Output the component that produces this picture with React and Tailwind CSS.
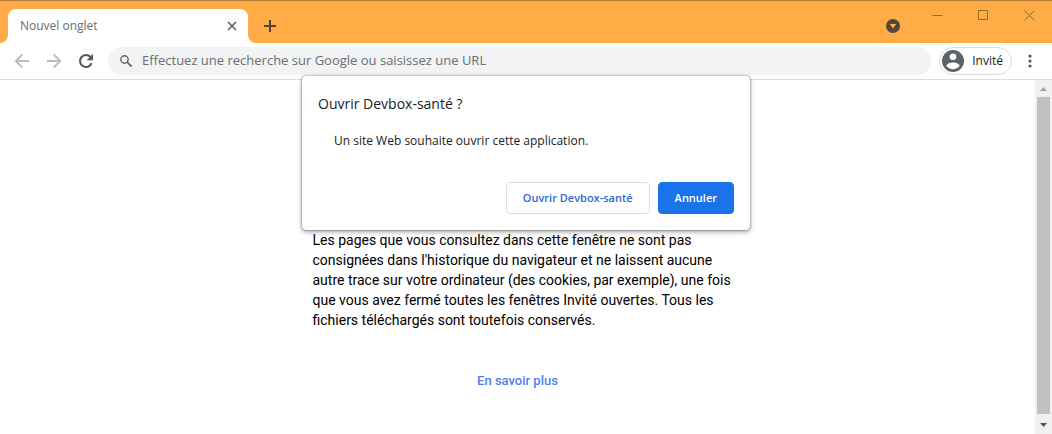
function TabFlare({ flip }) {
  return (
    <svg
      className={flip ? "h-2 w-2 shrink-0 -scale-x-100" : "h-2 w-2 shrink-0"}
      viewBox="0 0 8 8"
      aria-hidden="true"
    >
      <path d="M8 0v8H0a8 8 0 0 0 8-8z" fill="#fff" />
    </svg>
  );
}

function WindowButton({ label, d }) {
  return (
    <button type="button" aria-label={label} className="flex h-7 w-[46px] items-center justify-center">
      <svg
        className="h-[11px] w-[11px]"
        viewBox="0 0 11 11"
        fill="none"
        stroke="currentColor"
        aria-hidden="true"
      >
        <path d={d} />
      </svg>
    </button>
  );
}

function TitleBar() {
  return (
    <header className="flex h-[43px] items-start border-t border-[#b5803f] bg-[#ffac47]">
      <div className="mt-2 flex h-[34px] items-end">
        <TabFlare />
        <div className="flex h-full w-60 items-center justify-between rounded-t-lg bg-white pr-2.5 pl-3">
          <span className="text-xs text-[#6a6d71]">Nouvel onglet</span>
          <button type="button" aria-label="Fermer l'onglet" className="flex h-3 w-3 items-center justify-center">
            <svg className="h-3 w-3" viewBox="0 0 12 12" stroke="#5f6368" strokeWidth="1.7" aria-hidden="true">
              <path d="M2 2l8 8M10 2l-8 8" />
            </svg>
          </button>
        </div>
        <TabFlare flip />
      </div>
      <button type="button" aria-label="Nouvel onglet" className="mt-[19px] ml-2">
        <svg className="h-3 w-3" viewBox="0 0 12 12" stroke="#4d4439" strokeWidth="2" aria-hidden="true">
          <path d="M6 0v12M0 6h12" />
        </svg>
      </button>
      <div className="ml-auto flex items-start">
        <button type="button" aria-label="Rechercher dans les onglets" className="mt-[18px] mr-3.5">
          <svg className="h-3.5 w-3.5" viewBox="0 0 14 14" aria-hidden="true">
            <circle cx="7" cy="7" r="7" fill="#52483a" />
            <path d="M3.8 5h6.4L7 9.4z" fill="#ffac47" />
          </svg>
        </button>
        <div className="flex h-7 items-center text-[#9a692e]">
          <WindowButton label="Réduire" d="M0.5 5.5h10" />
          <WindowButton label="Agrandir" d="M0.5 0.5h9v9h-9z" />
          <WindowButton label="Fermer" d="M0.5 0.5l10 10M10.5 0.5l-10 10" />
        </div>
      </div>
    </header>
  );
}

function Toolbar() {
  return (
    <div className="flex h-[37px] items-center border-b border-[#dadce0] bg-white pr-5 pl-3.5">
      <nav className="flex items-center gap-4">
        <button type="button" aria-label="Retour">
          <svg className="h-4 w-4" viewBox="0 0 16 16" fill="none" stroke="#bcbdbf" strokeWidth="1.9" aria-hidden="true">
            <path d="M15 8H2.2M8.3 1.5L1.8 8l6.5 6.5" />
          </svg>
        </button>
        <button type="button" aria-label="Avancer">
          <svg className="h-4 w-4" viewBox="0 0 16 16" fill="none" stroke="#bcbdbf" strokeWidth="1.9" aria-hidden="true">
            <path d="M1 8h12.8M7.7 1.5L14.2 8l-6.5 6.5" />
          </svg>
        </button>
        <button type="button" aria-label="Actualiser">
          <svg className="h-4 w-4" viewBox="0 0 16 16" fill="none" aria-hidden="true">
            <path d="M13.6 10.2A6 6 0 1 1 12.4 3.9" stroke="#55585d" strokeWidth="2.1" />
            <path d="M15 0.8v6.4H8.6z" fill="#55585d" />
          </svg>
        </button>
      </nav>
      <label className="ml-3.5 flex h-7 grow items-center gap-2.5 rounded-full bg-[#f1f3f4] pr-4 pl-3">
        <svg className="h-3 w-3 shrink-0" viewBox="0 0 12 12" fill="none" stroke="#5f6368" strokeWidth="1.4" aria-hidden="true">
          <circle cx="4.5" cy="4.5" r="3.7" />
          <path d="M7.2 7.2l4.4 4.4" strokeWidth="1.7" />
        </svg>
        <input
          type="text"
          aria-label="Barre d'adresse et de recherche"
          placeholder="Effectuez une recherche sur Google ou saisissez une URL"
          className="min-w-0 grow bg-transparent text-[13px] outline-none placeholder:text-[#6b6e72]"
        />
      </label>
      <button
        type="button"
        className="ml-2 flex h-7 items-center gap-2 rounded-full border border-[#dadce0] pr-2 pl-0.5 text-xs text-[#202124]"
      >
        <svg className="h-[22px] w-[22px]" viewBox="0 0 22 22" aria-hidden="true">
          <circle cx="11" cy="11" r="11" fill="#5f6368" />
          <circle cx="11" cy="6.8" r="3.3" fill="#fff" />
          <path d="M11 12.4c-3 0-6.6 1.5-6.6 3.6 1.5 2 3.9 3.2 6.6 3.2s5.1-1.2 6.6-3.2c0-2.1-3.6-3.6-6.6-3.6z" fill="#fff" />
        </svg>
        Invité
      </button>
      <button type="button" aria-label="Menu" className="ml-4">
        <svg className="h-3.5 w-1" viewBox="0 0 4 14" fill="#55585d" aria-hidden="true">
          <circle cx="2" cy="2" r="1.6" />
          <circle cx="2" cy="7" r="1.6" />
          <circle cx="2" cy="12" r="1.6" />
        </svg>
      </button>
    </div>
  );
}

function Dialog() {
  return (
    <section
      role="dialog"
      aria-labelledby="dialog-title"
      className="absolute -top-1 left-1/2 w-[448px] -translate-x-1/2 rounded bg-white p-4 text-[#202124] shadow-[0_0_2px_rgba(0,0,0,0.6),0_2px_5px_rgba(0,0,0,0.35)]"
    >
      <h1 id="dialog-title" className="text-sm leading-6">
        Ouvrir Devbox-santé ?
      </h1>
      <p className="mt-[13px] px-4 text-xs leading-6">Un site Web souhaite ouvrir cette application.</p>
      <div className="mt-[29px] flex justify-end gap-2 text-[11px] font-semibold">
        <button type="button" className="h-8 rounded border border-[#dadce0] px-4 text-[#3367d6]">
          Ouvrir Devbox-santé
        </button>
        <button type="button" className="h-8 rounded border border-[#1a73e8] bg-[#1a73e8] px-4 text-white">
          Annuler
        </button>
      </div>
    </section>
  );
}

function Scrollbar() {
  return (
    <div className="flex w-[17px] shrink-0 flex-col items-center bg-[#f1f1f1]" aria-hidden="true">
      <svg className="h-[17px] w-[17px]" viewBox="0 0 17 17" fill="#a3a3a3">
        <path d="M5 11l3.5-4 3.5 4z" />
      </svg>
      <div className="w-[13px] grow bg-[#c1c1c1]" />
      <svg className="mt-0.5 h-[18px] w-[17px]" viewBox="0 0 17 18" fill="#505050">
        <path d="M5 7l3.5 4L12 7z" />
      </svg>
    </div>
  );
}

export default function App() {
  return (
    <div className="flex min-h-screen flex-col bg-white font-['Open_Sans','Noto_Sans',sans-serif]">
      <TitleBar />
      <Toolbar />
      <div className="relative flex grow">
        <main className="flex grow flex-col items-center pt-[150px] font-[Roboto,sans-serif]">
          <p className="w-[410px] text-sm leading-5 whitespace-nowrap text-black">
            Les pages que vous consultez dans cette fenêtre ne sont pas
            <br />
            consignées dans l'historique du navigateur et ne laissent aucune
            <br />
            autre trace sur votre ordinateur (des cookies, par exemple), une fois
            <br />
            que vous avez fermé toutes les fenêtres Invité ouvertes. Tous les
            <br />
            fichiers téléchargés sont toutefois conservés.
          </p>
          <a href="#en-savoir-plus" className="mt-[41px] text-[13px] leading-5 font-medium text-[#4d80ee]">
            En savoir plus
          </a>
        </main>
        <Scrollbar />
        <Dialog />
      </div>
    </div>
  );
}
